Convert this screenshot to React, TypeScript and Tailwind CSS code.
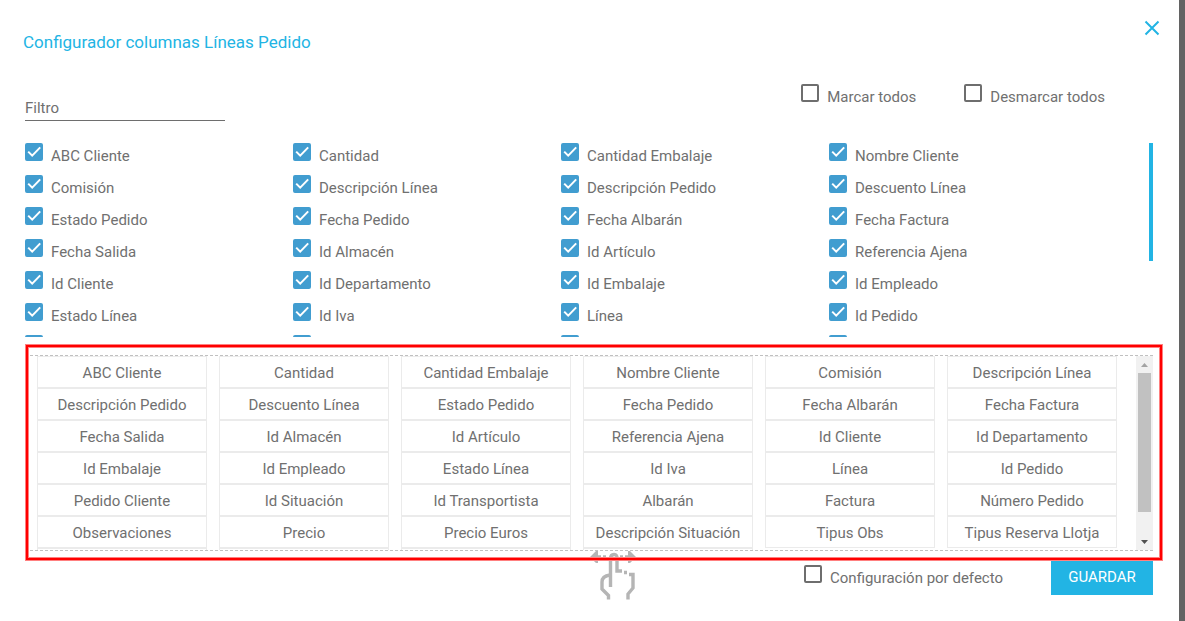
import { useState } from "react";

const COLUMNS = [
  "ABC Cliente", "Cantidad", "Cantidad Embalaje", "Nombre Cliente",
  "Comisión", "Descripción Línea", "Descripción Pedido", "Descuento Línea",
  "Estado Pedido", "Fecha Pedido", "Fecha Albarán", "Fecha Factura",
  "Fecha Salida", "Id Almacén", "Id Artículo", "Referencia Ajena",
  "Id Cliente", "Id Departamento", "Id Embalaje", "Id Empleado",
  "Estado Línea", "Id Iva", "Línea", "Id Pedido",
];

const MORE_COLUMNS = [
  "Pedido Cliente", "Id Situación", "Id Transportista", "Albarán",
  "Factura", "Número Pedido", "Observaciones", "Precio", "Precio Euros",
  "Descripción Situación", "Tipus Obs", "Tipus Reserva Llotja",
];

type CheckProps = { label: string; checked: boolean; onChange: () => void; boxOnly?: boolean };

function Check({ label, checked, onChange, boxOnly = false }: CheckProps) {
  return (
    <label className="flex h-8 items-start gap-2">
      <span className="relative block size-[18px] shrink-0">
        <input
          type="checkbox"
          aria-label={label}
          checked={checked}
          onChange={onChange}
          className="block size-[18px] appearance-none rounded-xs border-2 border-[#6e6e6e] checked:border-[#419dd0] checked:bg-[#419dd0]"
        />
        {checked && (
          <svg viewBox="0 0 18 18" className="pointer-events-none absolute inset-0 size-[18px]" fill="none" stroke="white" strokeWidth="2">
            <path d="M3.2 8.6 7.2 12.6 15.2 4.4" />
          </svg>
        )}
      </span>
      {!boxOnly && <span className="pt-px leading-6 whitespace-nowrap">{label}</span>}
    </label>
  );
}

function SwipeIcon() {
  return (
    <svg viewBox="0 0 46 50" className="h-[50px] w-[46px]" fill="none" stroke="#b5b5b5" strokeWidth="3.4">
      <path d="M0 6 6 0h2v12H6zM46 6 40 0h-2v12h2z" fill="#b5b5b5" stroke="none" />
      <path d="M7 6h4M13 6h3M30 6h3M35 6h4" />
      <path d="M20.500 36V8q0-4.500 3.500-4.500T27 8v12h5" />
      <path d="M34 21.500h3M39 23.500h4V37l-5 6v5.500" />
      <path d="M20 24q-8 1-8 7v7l6.500 6.500v4" />
    </svg>
  );
}

export default function App() {
  const [off, setOff] = useState<string[]>([]);
  const [all, setAll] = useState(false);
  const [none, setNone] = useState(false);
  const [byDefault, setByDefault] = useState(false);
  const toggle = (name: string) =>
    setOff((list) => (list.includes(name) ? list.filter((n) => n !== name) : [...list, name]));

  return (
    <div className="flex min-h-screen bg-[#636363] pr-1.5 font-[Roboto,sans-serif] text-[15px] text-[#707070]">
      <main className="min-w-0 flex-1 bg-white pt-5 pr-[26px] pl-[25px]">
        <header className="flex items-start justify-between">
          <h1 className="-ml-0.5 pt-2 text-[17px] leading-7 text-[#22b4e4]">Configurador columnas Líneas Pedido</h1>
          <button type="button" aria-label="Cerrar" className="-mr-[7px] text-[#22b4e4]">
            <svg viewBox="0 0 16 16" className="size-4" fill="none" stroke="currentColor" strokeWidth="2">
              <path d="M1.500 1.500 14.500 14.500M14.500 1.500 1.500 14.500" />
            </svg>
          </button>
        </header>

        <div className="mt-7 flex h-[59px] items-start justify-between">
          <input
            aria-label="Filtro"
            placeholder="Filtro"
            className="mt-3 h-[25px] w-[200px] border-b border-[#6e6e6e] outline-none placeholder:text-[#707070]"
          />
          <div className="mr-12 flex gap-12">
            <Check label="Marcar todos" checked={all} onChange={() => setAll(!all)} />
            <Check label="Desmarcar todos" checked={none} onChange={() => setNone(!none)} />
          </div>
        </div>

        <section className="flex h-[194px] justify-between overflow-hidden">
          <div className="mr-[52px] grid flex-1 auto-rows-[32px] grid-cols-4">
            {COLUMNS.map((name) => (
              <Check key={name} label={name} checked={!off.includes(name)} onChange={() => toggle(name)} />
            ))}
            {MORE_COLUMNS.slice(0, 4).map((name) => (
              <Check key={name} label={name} boxOnly checked={!off.includes(name)} onChange={() => toggle(name)} />
            ))}
          </div>
          <div className="h-[118px] w-1 bg-[#22b4e4]" />
        </section>

        <section className="relative mt-[18px] border-y border-dashed border-[#c0c0c0]">
          <div className="flex h-[194px] overflow-hidden">
            <ul className="mr-[19px] ml-3 grid flex-1 auto-rows-[32px] grid-cols-6 gap-x-3">
              {[...COLUMNS, ...MORE_COLUMNS].map((name) => (
                <li key={name} draggable className="cursor-move border border-[#ebebeb] text-center leading-8 whitespace-nowrap">
                  {name}
                </li>
              ))}
              {[1, 2, 3, 4].map((slot) => (
                <li key={slot} className="border border-[#ebebeb]" />
              ))}
            </ul>
            <div className="flex h-full w-[17px] flex-col items-center bg-[#f1f1f1]">
              <svg viewBox="0 0 17 17" className="size-[17px]"><path d="M5 11h7L8.500 7z" fill="#a3a3a3" /></svg>
              <div className="h-[139px] w-[13px] bg-[#c1c1c1]" />
              <svg viewBox="0 0 17 17" className="mt-auto size-[17px]"><path d="M5 7h7L8.500 11z" fill="#505050" /></svg>
            </div>
          </div>
          <div className="pointer-events-none absolute -top-3 -right-[10px] bottom-[-11px] left-0 z-10 border border-[#ff8080]">
            <div className="h-full border-2 border-[#ff0000]">
              <div className="h-full border border-[#ff8080]" />
            </div>
          </div>
        </section>

        <footer className="grid grid-cols-[1fr_auto_1fr] items-start">
          <div className="col-start-2 pl-12">
            <SwipeIcon />
          </div>
          <div className="flex items-start justify-end gap-12 pt-[9px]">
            <div className="pt-[5px]">
              <Check label="Configuración por defecto" checked={byDefault} onChange={() => setByDefault(!byDefault)} />
            </div>
            <button type="button" className="h-[35px] w-[102px] bg-[#22b4e4] text-white">GUARDAR</button>
          </div>
        </footer>
      </main>
    </div>
  );
}
